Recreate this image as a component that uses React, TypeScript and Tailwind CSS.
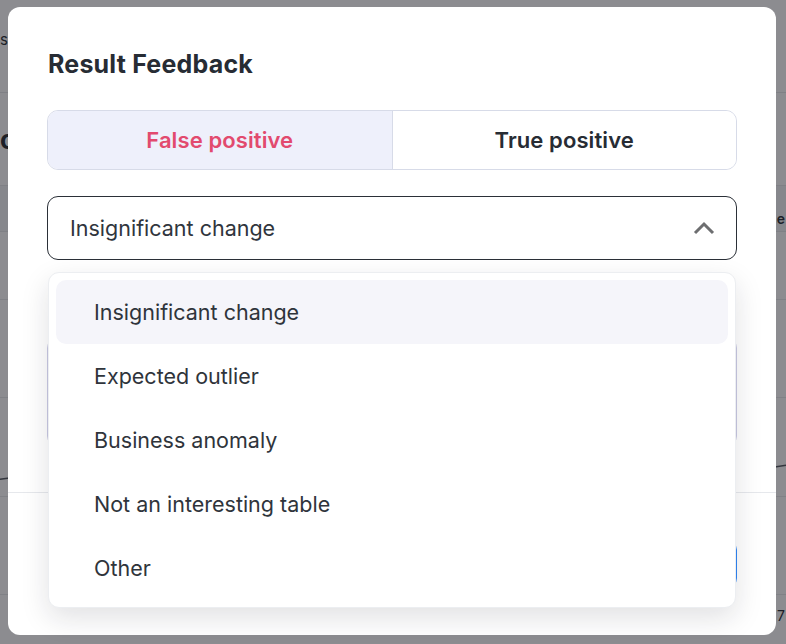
import React from 'react';

const options = [
  'Insignificant change',
  'Expected outlier',
  'Business anomaly',
  'Not an interesting table',
  'Other',
];

function Chevron() {
  return (
    <svg width="22" height="14" viewBox="0 0 22 14" fill="none" className="text-[#6d6e70]">
      <polyline points="2,12 11,3 20,12" stroke="currentColor" strokeWidth="3" strokeLinejoin="miter" />
    </svg>
  );
}

// page that sits behind the dimmed overlay
function BackgroundPage() {
  return (
    <div className="flex h-full w-full flex-col bg-[#f7f8fa] text-[#2b3038]">
      <div className="flex h-[93px] items-center border-b border-[#dfe1e6] pb-[12px] text-[15px]">
        <span>s</span>
      </div>
      <div className="flex h-[92px] items-center text-[26px] font-bold">
        <span>o</span>
      </div>
      <div className="flex h-[47px] items-center justify-end border-y border-[#dfe1e6] bg-[#eceef2] pt-[20px] pr-[1px] text-[14px] font-semibold">
        <span>e</span>
      </div>
      <div className="h-[68px] border-b border-[#e2e4e8]" />
      <div className="h-[98px] border-b border-[#e2e4e8]" />
      <div className="relative h-[99px] border-b border-[#e2e4e8]">
        <svg className="absolute inset-0 h-full w-full" viewBox="0 0 786 99" preserveAspectRatio="none">
          <polyline points="0,82 30,78 760,72 786,68" stroke="#555a63" strokeWidth="1.5" fill="none" />
        </svg>
      </div>
      <div className="h-[98px] border-b border-[#e2e4e8]" />
      <div className="flex justify-end pt-[10px] pr-[1px] text-[14px]">
        <span>7</span>
      </div>
    </div>
  );
}

export default function App() {
  const selected = options[0];

  return (
    <div
      className="relative h-[644px] w-[786px] overflow-hidden"
      style={{ fontFamily: 'Inter, "Noto Sans", sans-serif' }}
    >
      <BackgroundPage />

      {/* Overlay */}
      <div className="absolute inset-0 flex bg-[#0c0e13]/[0.46] pl-[8px] pt-[7px]">
        {/* Modal */}
        <div className="flex h-[628px] w-[768px] flex-col rounded-[12px] bg-white">
          <div className="flex flex-col px-[39px] pt-[42px]">
            <h2 className="pl-[1px] text-[25px] leading-[30px] font-bold tracking-[0.2px] text-[#272c34]">Result Feedback</h2>

            {/* Toggle */}
            <div className="mt-[31px] flex h-[60px] overflow-hidden rounded-[11px] border border-[#d7dbe8]">
              <button className="flex flex-1 items-center justify-center bg-[#eef0fb] text-[22px] font-semibold tracking-[0.1px] text-[#e24a6e]">
                False positive
              </button>
              <button className="flex flex-1 items-center justify-center border-l border-[#d7dbe8] bg-white text-[22px] font-semibold tracking-[0.1px] text-[#272c34]">
                True positive
              </button>
            </div>

            {/* Select */}
            <div className="relative mt-[26px]">
              <div className="flex h-[64px] items-center justify-between rounded-[11px] border border-[#2b3038] pl-[22px] pr-[21px]">
                <span className="text-[21.5px] text-[#30353d]">{selected}</span>
                <Chevron />
              </div>

              {/* Dropdown menu */}
              <div className="absolute left-[1px] right-[1px] top-[76px] z-10 flex flex-col rounded-[11px] border border-[#eceef1] bg-white p-[7px] shadow-[0_10px_28px_rgba(20,24,40,0.13)]">
                {options.map((opt) => (
                  <div
                    key={opt}
                    className={
                      opt === selected
                        ? 'flex h-[64px] items-center rounded-[10px] bg-[#f5f5fa] pl-[38px] text-[21.5px] text-[#2f343b]'
                        : 'flex h-[64px] items-center rounded-[10px] pl-[38px] text-[21.5px] text-[#2f343b]'
                    }
                  >
                    {opt}
                  </div>
                ))}
              </div>
            </div>

            {/* Comment field (hidden under the menu) */}
            <label className="mt-[14px] pl-[6px] text-[15px] text-[#555a63]">Comment</label>
            <div className="mt-[40px] h-[110px] rounded-[11px] border border-[#c9c9e3]" />
          </div>

          <div className="mt-[45px] border-t border-[#e6e8ec]" />

          {/* Footer */}
          <div className="flex justify-end gap-3 px-[39px] py-[47px]">
            <button className="h-[48px] rounded-[10px] border border-[#d7dbe8] px-6 text-[16px] text-[#272c34]">Cancel</button>
            <button className="h-[48px] rounded-[10px] bg-[#2f86f6] px-8 text-[16px] font-semibold text-white">Submit</button>
          </div>
        </div>
      </div>
    </div>
  );
}
